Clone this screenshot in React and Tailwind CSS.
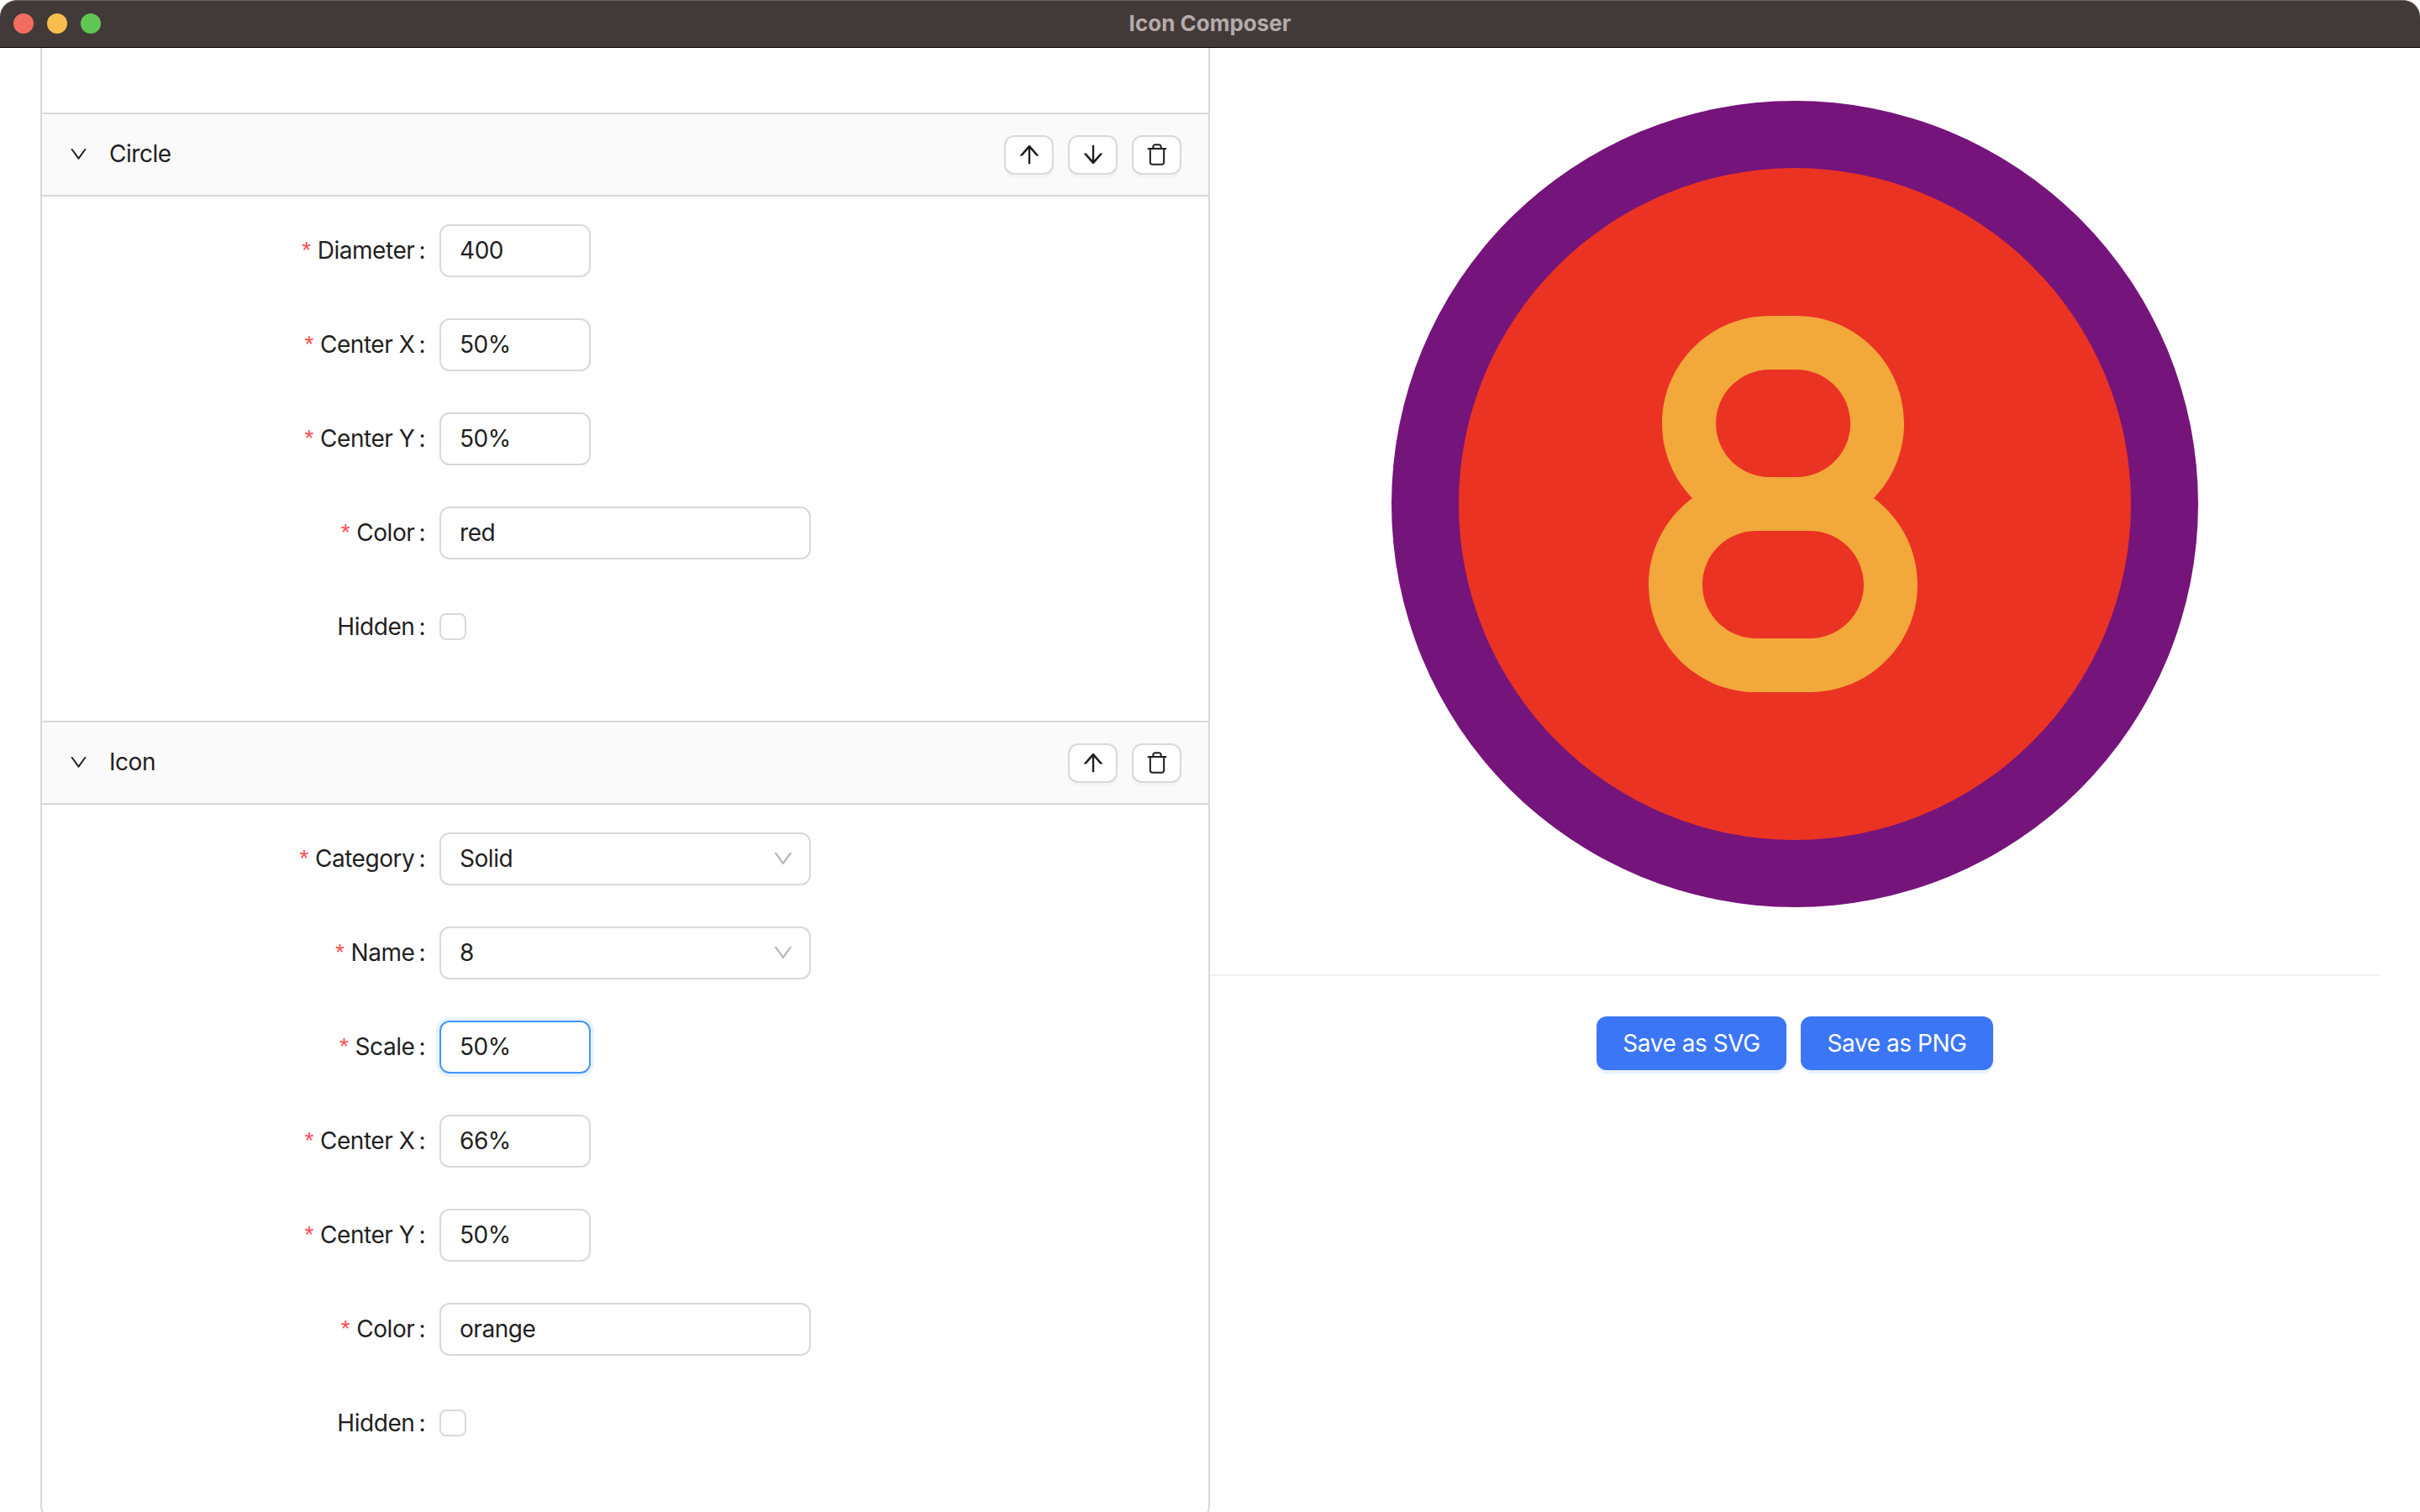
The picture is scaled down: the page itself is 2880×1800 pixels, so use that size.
import { AiOutlineArrowUp, AiOutlineArrowDown, AiOutlineDown } from 'react-icons/ai'
import { Fa8 } from 'react-icons/fa6'
import { LuTrash } from 'react-icons/lu'

const Label = ({ text, required }) => (
  <label className="w-[456px] shrink-0 flex justify-end items-center mr-[17px] text-[28px] text-[#1f1f1f]">
    {required && <span className="text-[#ff4d4f] mr-2 font-['Liberation_Sans'] text-[28px] leading-none">*</span>}
    <span>{text}</span>
    <span className="ml-[5px]">:</span>
  </label>
)

const Input = ({ value, wide, focused }) => (
  <div className={`h-[63px] flex items-center pl-[22px] rounded-xl border-2 ${wide ? 'w-[442px]' : 'w-[180px]'} ${focused ? 'border-[#4096ff] shadow-[0_0_0_4px_#e9f3ff]' : 'border-[#d9d9d9]'} text-[28px] text-[#1f1f1f]`}>
    {value}
  </div>
)

const Select = ({ value }) => (
  <div className="h-[63px] w-[442px] flex items-center justify-between pl-[22px] pr-[17px] rounded-xl border-2 border-[#d9d9d9] text-[28px] text-[#1f1f1f]">
    {value}
    <AiOutlineDown className="text-[#b5b5b5]" size={28} />
  </div>
)

const Row = ({ label, required = true, children }) => (
  <div className="flex items-center h-[64px] mb-[48px]">
    <Label text={label} required={required} />
    {children}
  </div>
)

const Hidden = () => (
  <Row label="Hidden" required={false}>
    <div className="w-[32px] h-[32px] rounded-lg border-2 border-[#d9d9d9] bg-white" />
  </Row>
)

const IconButton = ({ children }) => (
  <button type="button" className="w-[59px] h-[47px] flex items-center justify-center bg-white rounded-xl border-2 border-[#d9d9d9] shadow-[0_4px_0_rgba(0,0,0,0.02)] text-[#1f1f1f]">
    {children}
  </button>
)

const Section = ({ title, up = true, down, children }) => (
  <div>
    <div className="h-[100px] flex items-center justify-between bg-[#fafafa] border-y-2 border-[#d9d9d9] pl-[31px] pr-[32px]">
      <div className="flex items-center pb-[2px] text-[28px] text-[#1f1f1f]">
        <AiOutlineDown size={25} className="mr-[24px]" />
        {title}
      </div>
      <div className="flex gap-[17px]">
        {up && <IconButton><AiOutlineArrowUp size={32} /></IconButton>}
        {down && <IconButton><AiOutlineArrowDown size={32} /></IconButton>}
        <IconButton><LuTrash size={28} strokeWidth={1.75} /></IconButton>
      </div>
    </div>
    <div className="pt-[32px] pb-[32px]">{children}</div>
  </div>
)

const Preview = () => (
  <svg width="960" height="960" viewBox="0 0 960 960">
    <circle cx="480" cy="480" r="480" fill="#75147b" />
    <circle cx="480" cy="480" r="400" fill="#eb3323" />
    <Fa8 x="210" y="224" size={512} className="text-[#f2a83b]" />
  </svg>
)

export default function App() {
  return (
    <div className="w-[2880px] h-[1800px] overflow-hidden bg-white font-['Inter','Liberation_Sans',sans-serif] tracking-[-0.45px] flex flex-col">
      <div className="h-[57px] shrink-0 relative flex items-center justify-center pb-[2px] bg-[#423a38] rounded-t-[20px] border-t border-t-[#6b6461] border-b border-b-black text-[26px] font-bold tracking-normal text-[#b5abab]">
        <div className="absolute left-[16px] top-[15px] flex gap-[16px]">
          <div className="w-[24px] h-[24px] rounded-full bg-[#f26d5f]" />
          <div className="w-[24px] h-[24px] rounded-full bg-[#f5be4f]" />
          <div className="w-[24px] h-[24px] rounded-full bg-[#61c554]" />
        </div>
        Icon Composer
      </div>
      <div className="flex flex-1 min-h-0 overflow-hidden">
        <div className="w-[1440px] shrink-0 pl-[48px]">
          <div className="h-[1752px] border-x-2 border-b-2 border-[#d9d9d9] rounded-b-2xl pt-[77px]">
            <Section title="Circle" down>
              <Row label="Diameter"><Input value="400" /></Row>
              <Row label="Center X"><Input value="50%" /></Row>
              <Row label="Center Y"><Input value="50%" /></Row>
              <Row label="Color"><Input value="red" wide /></Row>
              <Hidden />
            </Section>
            <Section title="Icon">
              <Row label="Category"><Select value="Solid" /></Row>
              <Row label="Name"><Select value="8" /></Row>
              <Row label="Scale"><Input value="50%" focused /></Row>
              <Row label="Center X"><Input value="66%" /></Row>
              <Row label="Center Y"><Input value="50%" /></Row>
              <Row label="Color"><Input value="orange" wide /></Row>
              <Hidden />
            </Section>
          </div>
        </div>
        <div className="flex-1 pr-[48px] flex flex-col items-center">
          <div className="pt-[63px] pb-[80px] w-full flex justify-center border-b-2 border-[#f0f0f0]">
            <Preview />
          </div>
          <div className="mt-[48px] flex gap-[17px]">
            <button type="button" className="w-[226px] h-[64px] rounded-xl bg-[#3b76f6] text-white text-[28px] shadow-[0_4px_0_#e9f3ff]">Save as SVG</button>
            <button type="button" className="w-[229px] h-[64px] rounded-xl bg-[#3b76f6] text-white text-[28px] shadow-[0_4px_0_#e9f3ff]">Save as PNG</button>
          </div>
        </div>
      </div>
    </div>
  )
}
